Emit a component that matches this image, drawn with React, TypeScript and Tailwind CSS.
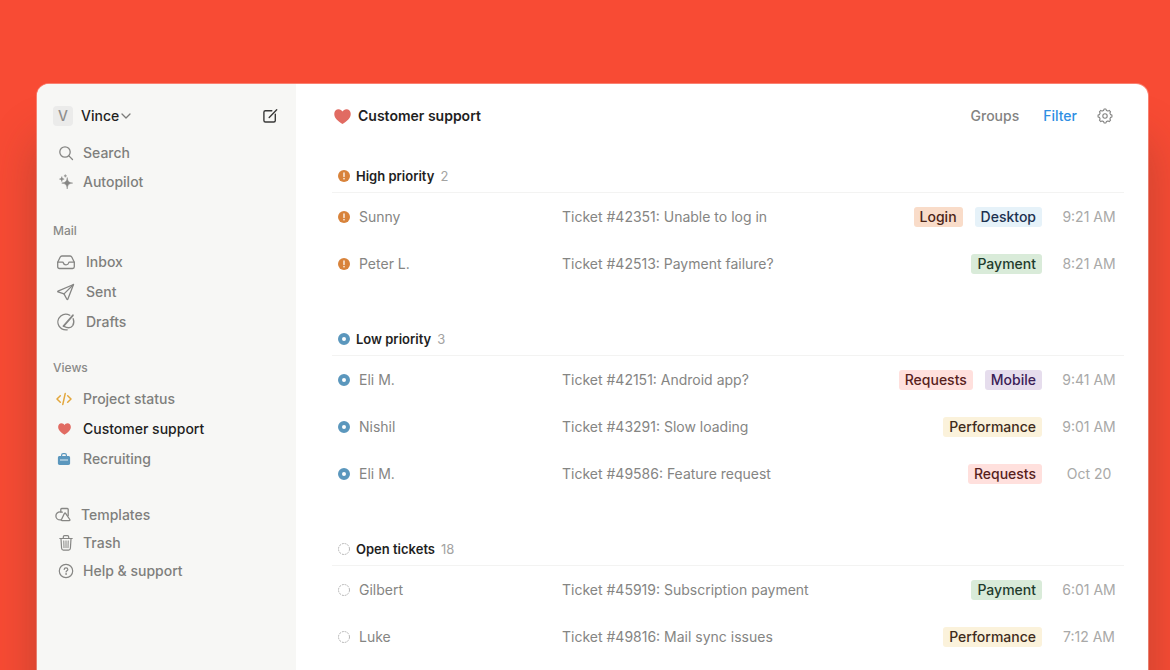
import type { ReactNode } from 'react';

type Kind = 'high' | 'low' | 'open';
type Ticket = { name: string; subject: string; tags: string[]; time: string };
type Group = { title: string; count: number; kind: Kind; tickets: Ticket[] };

const groups: Group[] = [
  {
    title: 'High priority',
    count: 2,
    kind: 'high',
    tickets: [
      { name: 'Sunny', subject: 'Ticket #42351: Unable to log in', tags: ['Login', 'Desktop'], time: '9:21 AM' },
      { name: 'Peter L.', subject: 'Ticket #42513: Payment failure?', tags: ['Payment'], time: '8:21 AM' },
    ],
  },
  {
    title: 'Low priority',
    count: 3,
    kind: 'low',
    tickets: [
      { name: 'Eli M.', subject: 'Ticket #42151: Android app?', tags: ['Requests', 'Mobile'], time: '9:41 AM' },
      { name: 'Nishil', subject: 'Ticket #43291: Slow loading', tags: ['Performance'], time: '9:01 AM' },
      { name: 'Eli M.', subject: 'Ticket #49586: Feature request', tags: ['Requests'], time: 'Oct 20' },
    ],
  },
  {
    title: 'Open tickets',
    count: 18,
    kind: 'open',
    tickets: [
      { name: 'Gilbert', subject: 'Ticket #45919: Subscription payment', tags: ['Payment'], time: '6:01 AM' },
      { name: 'Luke', subject: 'Ticket #49816: Mail sync issues', tags: ['Performance'], time: '7:12 AM' },
    ],
  },
];

const tagStyles: Record<string, string> = {
  Login: 'bg-[#f9dcc9] text-[#4a2417]',
  Desktop: 'bg-[#e6f2f9] text-[#1c3150]',
  Payment: 'bg-[#d9ebd9] text-[#1f3b2d]',
  Requests: 'bg-[#ffe0dd] text-[#571f1d]',
  Mobile: 'bg-[#e6dded] text-[#3a2056]',
  Performance: 'bg-[#fbf2db] text-[#402c1b]',
};

const stroke = {
  fill: 'none',
  stroke: 'currentColor',
  strokeWidth: 1.3,
  strokeLinecap: 'round',
  strokeLinejoin: 'round',
} as const;

function StatusIcon({ kind }: { kind: Kind }) {
  return (
    <svg viewBox="0 0 12 12" className="size-3 shrink-0" aria-hidden="true">
      {kind === 'high' && (
        <>
          <circle cx="6" cy="6" r="6" fill="#d8833b" />
          <path d="M6 3v3.6" stroke="#fff" strokeWidth="1.3" strokeLinecap="round" />
          <circle cx="6" cy="8.8" r=".8" fill="#fff" />
        </>
      )}
      {kind === 'low' && <circle cx="6" cy="6" r="4" fill="none" stroke="#5b97bd" strokeWidth="4" />}
      {kind === 'open' && (
        <circle cx="6" cy="6" r="5.5" fill="none" stroke="#a9a9a9" strokeWidth=".9" strokeDasharray="1.9 .98" />
      )}
    </svg>
  );
}

function Heart({ className }: { className: string }) {
  return (
    <svg viewBox="0 0 18 16" className={className} aria-hidden="true">
      <path
        d="M9 15.9C7.3 14.8.2 10.800.2 5.200.2 2.300 2.200.2 4.800.2 6.700.2 8.200 1.200 9 2.700 9.800 1.200 11.300.2 13.200.2c2.600 0 4.600 2.100 4.600 5 0 5.600-7.100 9.600-8.800 10.700z"
        fill="#e16b62"
      />
    </svg>
  );
}

const icons: Record<string, ReactNode> = {
  Search: (
    <svg viewBox="0 0 18 18" className="size-[18px]" {...stroke}>
      <circle cx="8" cy="8" r="5.2" />
      <path d="M11.900 11.900l3.600 3.600" />
    </svg>
  ),
  Autopilot: (
    <svg viewBox="0 0 18 18" className="size-[18px]" fill="currentColor" stroke="currentColor" strokeWidth=".5" strokeLinejoin="round">
      <path d="M10.200 4.500c.5 3.900 1.500 5 5.500 5.600-4 .6-5 1.700-5.500 5.900-.5-4.200-1.500-5.300-5.500-5.900 4-.6 5-1.700 5.500-5.600z" />
      <path d="M4.800 3.600c.3 1.700.8 2.200 2.400 2.500-1.600.3-2.100.8-2.400 2.500-.3-1.700-.8-2.200-2.400-2.500 1.600-.3 2.100-.8 2.400-2.500zM8.300 1.500c.1 1 .4 1.300 1.400 1.400-1 .1-1.300.4-1.400 1.400-.1-1-.4-1.300-1.400-1.400 1-.1 1.300-.4 1.400-1.400z" />
    </svg>
  ),
  Inbox: (
    <svg viewBox="0 0 20 18" className="h-[18px] w-5" {...stroke}>
      <path d="M1.700 9.200l2.400-5c.4-.8 1-1.200 1.800-1.200h8.200c.8 0 1.400.4 1.800 1.200l2.400 5v4.600c0 1-.7 1.700-1.700 1.700H3.400c-1 0-1.700-.7-1.700-1.700z" />
      <path d="M1.800 9.200h4.700c.6 0 .8.3.9.8.2 1.100 1.200 1.900 2.600 1.900s2.400-.8 2.600-1.900c.1-.5.3-.8.9-.8h4.700" />
    </svg>
  ),
  Sent: (
    <svg viewBox="0 0 20 18" className="h-[18px] w-5" {...stroke}>
      <path d="M17.500 1.500L2 8.100c-.4.2-.4.7 0 .8l6 2 2.900 5.300c.2.400.7.400.9 0z" />
      <path d="M17.500 1.500L8 10.900" />
    </svg>
  ),
  Drafts: (
    <svg viewBox="0 0 20 18" className="h-[18px] w-5" {...stroke}>
      <path d="M13.800 2.300C11.200.8 7.400.9 4.800 3.100 1.800 5.600 1.100 9.700 2.900 12.900c1.700 2.900 4.800 4.200 8.300 3.900" />
      <path d="M17.200 5.600c.9 2.600.8 5-.5 7-2 2.900-5.600 2.500-9.200.5" />
      <path d="M16.900 2.300L7.500 13.100" strokeWidth="1.800" />
    </svg>
  ),
  'Project status': (
    <svg viewBox="0 0 16 14" className="h-[14px] w-4" {...stroke} stroke="#e3a73c" strokeWidth="1.5">
      <path d="M4.300 3.800L1 7l3.300 3.200M11.700 3.800L15 7l-3.300 3.200M9.200 1.600L6.800 12.400" />
    </svg>
  ),
  'Customer support': <Heart className="h-3 w-[13px]" />,
  Recruiting: (
    <svg viewBox="0 0 14 14" className="size-[14px]" aria-hidden="true">
      <path d="M4.600 4.500V3.300c0-1 .6-1.600 1.600-1.600h1.600c1 0 1.600.6 1.600 1.600v1.200" fill="none" stroke="#5b97bd" strokeWidth="1.2" />
      <path d="M2.600 4h8.800c1 0 1.700.7 1.700 1.700v5.600c0 1-.7 1.700-1.700 1.700H2.600c-1 0-1.700-.7-1.700-1.700V5.700C.9 4.700 1.600 4 2.600 4z" fill="#5b97bd" />
      <path d="M3 8h8" stroke="#d3e3ee" strokeWidth="1.100" />
    </svg>
  ),
  Templates: (
    <svg viewBox="0 0 18 16" className="h-4 w-[18px]" {...stroke}>
      <path d="M6.800 5.200V2.400c0-.6.300-.9.900-.9h5.600c.6 0 .9.300.9.900v6.200" />
      <path d="M8.200 5.200C7.600 4.900 7 4.800 6.300 4.800c-2.500 0-4.400 1.800-4.400 4.100s1.900 4 4.400 4c.3 0 .6 0 .9-.1" />
      <path d="M11.600 6.300l4.200 6.200c.4.600.1 1.200-.6 1.200H8.100c-.7 0-1-.6-.6-1.200l3-6.200c.3-.4.8-.4 1.100 0z" />
    </svg>
  ),
  Trash: (
    <svg viewBox="0 0 16 18" className="h-[18px] w-4" {...stroke} strokeWidth="1.200">
      <path d="M1.800 4.500h12.400M5.300 4.300V2.900c0-.8.500-1.200 1.200-1.200h3c.7 0 1.200.4 1.200 1.200v1.400M3 4.700l.6 9.600c.1 1.100.8 1.800 1.800 1.800h5.200c1 0 1.700-.7 1.800-1.800l.6-9.600" />
      <path d="M5.800 6.900l.2 6.800M8 6.900v6.800M10.200 6.900l-.2 6.800" strokeWidth="1" />
    </svg>
  ),
  'Help & support': (
    <svg viewBox="0 0 16 16" className="size-4" {...stroke} strokeWidth="1.200">
      <circle cx="8" cy="8" r="6.700" />
      <path d="M6.200 6.500c0-1.100.8-1.700 1.800-1.700s1.800.7 1.800 1.600c0 1.300-1.700 1.300-1.700 2.500" />
      <circle cx="8.100" cy="11" r=".3" />
    </svg>
  ),
};

function NavItem({ label, row, active }: { label: string; row: string; active?: boolean }) {
  return (
    <li>
      <a
        href="#"
        aria-current={active ? 'page' : undefined}
        className={`flex items-center ${row} ${active ? 'text-[#1f1f1f]' : 'text-[#7f7f7d]'}`}
      >
        <span className="flex w-5 shrink-0 justify-center text-[#868684]">{icons[label]}</span>
        {label}
      </a>
    </li>
  );
}

function Sidebar() {
  return (
    <aside className="w-[259px] shrink-0 bg-[#f7f7f5] px-4 pt-4 text-sm font-medium">
      <div className="flex h-8 items-center justify-between">
        <button className="flex items-center text-[#1f1f1f]">
          <span className="mr-2 flex size-5 items-center justify-center rounded bg-[#ebebea] text-[#8f8f8d]">V</span>
          Vince
          <svg viewBox="0 0 10 6" className="ml-[2px] h-[6px] w-[10px] text-[#7c7c7a]" {...stroke}>
            <path d="M1 1l4 4 4-4" />
          </svg>
        </button>
        <button aria-label="Compose" className="mr-[2px] text-[#3a3a39]">
          <svg viewBox="0 0 16 16" className="size-4" {...stroke} strokeWidth="1.400">
            <path d="M9.800 2.800H3.400c-.9 0-1.500.6-1.500 1.500v8.200c0 .9.600 1.500 1.500 1.500h8.400c.9 0 1.500-.6 1.500-1.500V6.200" />
            <path d="M14.700 1.700L7.200 9.400" />
          </svg>
        </button>
      </div>
      <nav aria-label="Mailbox">
        <ul className="mt-[6px]">
          <NavItem label="Search" row="h-[29px] gap-[7px] pl-[3px]" />
          <NavItem label="Autopilot" row="h-[29px] gap-[7px] pl-[3px]" />
        </ul>
        <h2 className="mt-[25px] text-xs leading-5 text-[#8a8a88]">Mail</h2>
        <ul className="mt-[6px]">
          <NavItem label="Inbox" row="h-[30px] gap-[10px] pl-[3px]" />
          <NavItem label="Sent" row="h-[30px] gap-[10px] pl-[3px]" />
          <NavItem label="Drafts" row="h-[30px] gap-[10px] pl-[3px]" />
        </ul>
        <h2 className="mt-[21px] text-xs leading-5 text-[#8a8a88]">Views</h2>
        <ul className="mt-[6px]">
          <NavItem label="Project status" row="h-[30px] gap-[9px] pl-[1px]" />
          <NavItem label="Customer support" row="h-[30px] gap-[9px] pl-[1px]" active />
          <NavItem label="Recruiting" row="h-[30px] gap-[9px] pl-[1px]" />
        </ul>
        <ul className="mt-[27px]">
          <NavItem label="Templates" row="h-7 gap-2" />
          <NavItem label="Trash" row="h-7 gap-[7px] pl-[3px]" />
          <NavItem label="Help & support" row="h-7 gap-[7px] pl-[3px]" />
        </ul>
      </nav>
    </aside>
  );
}

function TicketGroup({ group }: { group: Group }) {
  return (
    <section>
      <h2 className="flex items-center border-b border-[#f3f3f2] pb-[6px] pl-[6px] text-[13px] leading-5 font-semibold text-[#1f1f1f]">
        <StatusIcon kind={group.kind} />
        <span className="ml-[6px]">{group.title}</span>
        <span className="ml-[6px] font-normal text-[#a3a3a2]">{group.count}</span>
      </h2>
      <table aria-label={group.title} className="w-full table-fixed text-sm">
        <tbody>
          {group.tickets.map((t) => (
            <tr key={t.subject} className="h-[47px] text-[#858583]">
              <td className="w-[230px] pl-[6px]">
                <span className="flex items-center gap-[9px]">
                  <StatusIcon kind={group.kind} />
                  {t.name}
                </span>
              </td>
              <td className="whitespace-nowrap">{t.subject}</td>
              <td className="w-[190px]">
                <span className="flex justify-end gap-3">
                  {t.tags.map((tag) => (
                    <span key={tag} className={`rounded-[3px] px-[6px] leading-5 font-medium ${tagStyles[tag]}`}>
                      {tag}
                    </span>
                  ))}
                </span>
              </td>
              <td className="w-[82px] pl-3 text-center text-[#a9a9a8]">{t.time}</td>
            </tr>
          ))}
        </tbody>
      </table>
    </section>
  );
}

function Gear() {
  const teeth = Array.from({ length: 8 }, (_, i) => {
    const at = (deg: number, r: number) => {
      const a = ((i * 45 + deg) * Math.PI) / 180;
      return `${(8 + r * Math.sin(a)).toFixed(2)} ${(8 - r * Math.cos(a)).toFixed(2)}`;
    };
    return `${i ? 'L' : 'M'}${at(-14, 5.7)}L${at(-8, 7)}L${at(8, 7)}L${at(14, 5.7)}`;
  }).join('');
  return (
    <svg viewBox="0 0 16 16" className="size-4" {...stroke} strokeWidth="1.100">
      <path d={`${teeth}Z`} />
      <circle cx="8" cy="8" r="2.200" />
    </svg>
  );
}

export default function App() {
  return (
    <div className="flex min-h-screen bg-[#f84b34] pt-[84px] pr-[22px] pl-[37px] font-['Inter',sans-serif]">
      <div className="flex flex-1 overflow-hidden rounded-t-xl bg-white shadow-[0_0_0_1px_rgba(255,255,255,0.3),0_56px_48px_rgba(70,50,40,0.3)]">
        <Sidebar />
        <main className="min-w-0 flex-1 pr-6 pl-9">
          <header className="flex h-16 items-center justify-between pr-[11px] pl-[2px]">
            <h1 className="flex items-center gap-[7px] text-sm font-semibold text-[#1f1f1f]">
              <Heart className="h-[15px] w-[17px]" />
              Customer support
            </h1>
            <div className="flex items-center gap-6 text-sm font-medium text-[#838382]">
              <button>Groups</button>
              <button className="text-[#2f8fe3]">Filter</button>
              <button aria-label="Settings" className="-ml-1">
                <Gear />
              </button>
            </div>
          </header>
          <div className="flex flex-col gap-[42px] pt-[18px]">
            {groups.map((g) => (
              <TicketGroup key={g.title} group={g} />
            ))}
          </div>
        </main>
      </div>
    </div>
  );
}
